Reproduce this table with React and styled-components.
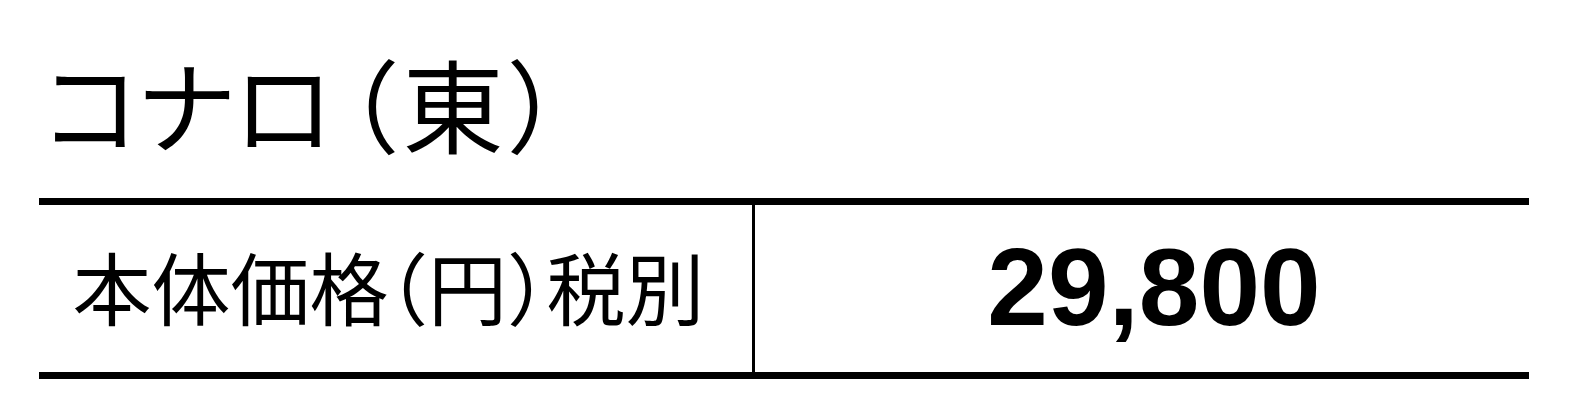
import React from "react";
import styled, { createGlobalStyle } from "styled-components";

const Global = createGlobalStyle`
  html, body { margin: 0; padding: 0; background: #fff; }
  body { font-family: "Noto Sans CJK JP", "Noto Sans", sans-serif; color: #000; }
`;

const Page = styled.div`
  width: 1572px;
  height: 420px;
  box-sizing: border-box;
  padding: 0 43px 0 39px;
  display: flex;
  flex-direction: column;
`;

const Title = styled.h1`
  flex: none;
  margin: 0;
  padding: 52px 0 0 0;
  height: 198px;
  box-sizing: border-box;
  font-family: "Noto Sans CJK JP", sans-serif;
  font-weight: 400;
  font-size: 101px;
  line-height: 101px;
  letter-spacing: -4px;
  white-space: nowrap;
`;

const Region = styled.span`
  margin-left: 19px;
  letter-spacing: 3px;
  font-feature-settings: "halt";
`;

const Table = styled.div`
  flex: none;
  display: grid;
  grid-template-columns: 713px 1fr;
  border-top: 7px solid #000;
  border-bottom: 7px solid #000;
  height: 181px;
  box-sizing: border-box;
`;

const Cell = styled.div`
  display: flex;
  align-items: center;
  justify-content: center;
  border-left: ${(p) => (p.$divider ? "3px solid #000" : "none")};
  padding: ${(p) => p.$pad || "0"};
`;

const Label = styled.span`
  font-family: "Noto Sans CJK JP", sans-serif;
  font-size: 79px;
  line-height: 1;
  white-space: nowrap;
  font-feature-settings: "halt";
`;

const Price = styled.span`
  font-family: "Liberation Sans", Arial, sans-serif;
  font-weight: 700;
  font-size: 109px;
  line-height: 1;
  letter-spacing: 0;
`;

export default function App() {
  return (
    <>
      <Global />
      <Page>
        <Title>
          コナロ<Region>（東）</Region>
        </Title>
        <Table>
          <Cell $pad="0 14px 6px 0">
            <Label>本体価格（円）税別</Label>
          </Cell>
          <Cell $divider $pad="0 0 2px 24px">
            <Price>29,800</Price>
          </Cell>
        </Table>
      </Page>
    </>
  );
}
